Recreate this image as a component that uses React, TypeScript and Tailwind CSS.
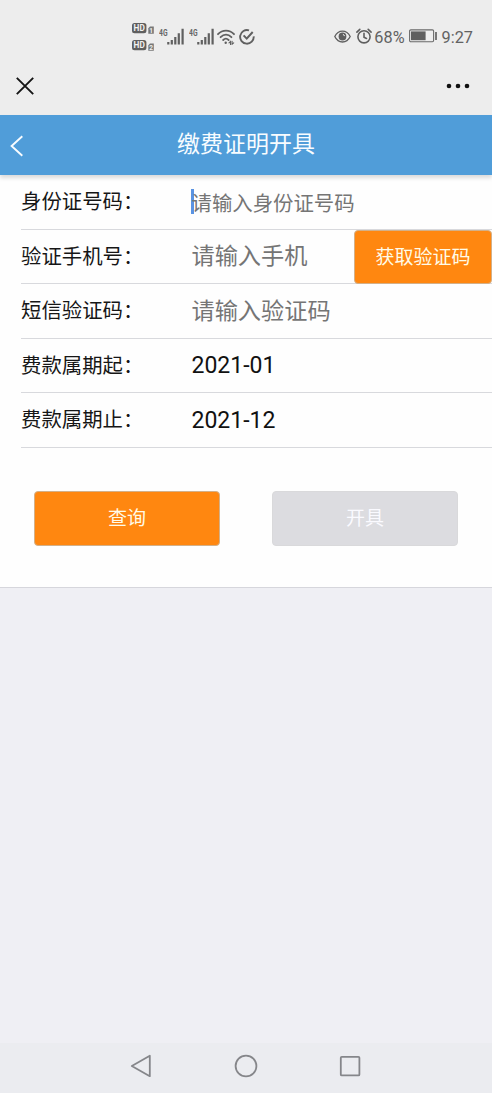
import React, { memo } from 'react';

// Small "HD" badge with the SIM card number next to it
const HdBadge = memo<{ sim: string }>(({ sim }) => (
  <svg width="22" height="11" viewBox="0 0 22 11">
    <rect x="0" y="0" width="14.4" height="10.2" rx="2.5" fill="#5f5f5f" />
    <text x="1.6" y="8.2" fontSize="8.6" fontWeight="700" textLength="11.2" lengthAdjust="spacingAndGlyphs" fill="#f2f2f2">HD</text>
    <path d="M16.3 5.2 18 3.4h3.8v7.4h-5.5z" fill="#777" />
    <text x="19.1" y="9.6" fontSize="6.5" fontWeight="700" textAnchor="middle" fill="#f2f2f2">{sim}</text>
  </svg>
));

const Signal = memo(() => (
  <svg width="26" height="18" viewBox="0 0 26 18">
    <text x="0" y="8" fontSize="9.4" fontWeight="700" textLength="8.5" lengthAdjust="spacingAndGlyphs" fill="#666">4G</text>
    <path d="M9.3 14v2.6M12.8 12v4.6M16.3 9v7.6M19.8 5.2v11.4M23.6 .8v15.8" stroke="#606060" strokeWidth="2.2" fill="none" />
  </svg>
));

const Wifi = memo(() => (
  <svg width="18" height="16" viewBox="0 0 18 16" fill="none" stroke="#606060" strokeWidth="1.8" strokeLinecap="round">
    <path d="M1 5.2C5.5.4 12.5.4 17 5.2M3.6 8.2c3.3-3.4 7.5-3.4 10.8 0M6.2 11c1.7-1.7 3.7-1.7 5.4 0" />
    <circle cx="8.7" cy="13.8" r="1.2" fill="#606060" stroke="none" />
    <path d="m12 13.8 1.5-1.4v3M15.1 12.2v3l1.6-1.4" strokeWidth="1.1" />
  </svg>
));

const CheckRing = memo(() => (
  <svg width="16" height="16" viewBox="0 0 16 16" fill="none" stroke="#606060" strokeWidth="1.9">
    <path d="M10 1.4A6.8 6.8 0 1 0 14.7 7.4" />
    <path d="m4.6 6.4 3.1 3.2 6-6.6" strokeWidth="2" />
  </svg>
));

const Eye = memo(() => (
  <svg width="17" height="13" viewBox="0 0 17 13" fill="none" stroke="#5f5f5f" strokeWidth="1.3">
    <path d="M.8 6.5C4.3-.8 12.7-.8 16.2 6.5 12.7 13.8 4.3 13.8.8 6.5Z" />
    <circle cx="8.5" cy="6.5" r="3.9" fill="#5f5f5f" stroke="none" />
    <path d="M8.9 4.4a2 2 0 0 1 1.6 1.7" stroke="#ededed" strokeWidth="1" />
  </svg>
));

const Alarm = memo(() => (
  <svg className="block" width="16" height="16" viewBox="0 0 16 16" fill="none" stroke="#5f5f5f" strokeWidth="1.6">
    <circle cx="8" cy="8.8" r="6.1" />
    <path d="M8 5.2v4l2.5 1.3M.9 4.1 3.8 1.3M12.2 1.3l2.9 2.8" strokeLinecap="round" />
  </svg>
));

const Battery = memo(() => (
  <svg className="block" width="28" height="14" viewBox="0 0 28 14">
    <rect x=".6" y=".9" width="24" height="11.8" rx="1.2" fill="none" stroke="#6a6a6a" strokeWidth="1.1" />
    <rect x="2" y="2.4" width="14.6" height="8.8" fill="#5f5f5f" />
    <path d="M27 3v8" stroke="#6a6a6a" strokeWidth="1.8" />
  </svg>
));

const StatusBar = memo(() => (
  <div className="flex h-[58px] items-center pt-[15px] pr-[19px] pl-[132px] font-[Roboto,sans-serif] text-[#626262]">
    <div className="flex flex-col gap-[6px]">
      <HdBadge sim="1" />
      <HdBadge sim="2" />
    </div>
    <div className="ml-[4.5px] flex gap-[4px]">
      <Signal />
      <Signal />
    </div>
    <div className="ml-[2.5px] flex gap-[3.5px]">
      <Wifi />
      <CheckRing />
    </div>
    <div className="ml-auto flex items-center">
      <Eye />
      <span className="ml-[5px]"><Alarm /></span>
      <span className="ml-[2px] pt-[3px] text-[16.3px] leading-none">68%</span>
      <span className="ml-[4px]"><Battery /></span>
      <span className="ml-[5px] pt-[3px] text-[16.3px] leading-none">9:27</span>
    </div>
  </div>
));

const Row: React.FC<{ label: string; children: React.ReactNode }> = ({ label, children }) => (
  <div className="ml-[21px] flex h-[54.6px] items-center border-b border-[#d8d9dd]">
    <div className="w-[170.5px] pb-[3px] text-[20.4px] leading-none text-[#161616]">{label}</div>
    {children}
  </div>
);

const App: React.FC = () => {
  return (
    <div className="flex h-[1093px] w-[492px] flex-col bg-[#efeff4] font-['Noto_Sans_CJK_SC',sans-serif]">
      <div className="h-[115px] bg-[#ededed]">
        <StatusBar />
        <div className="flex h-[56px] items-center justify-between pr-[22px] pl-[16px]">
          <svg width="18" height="18" viewBox="0 0 18 18" stroke="#151515" strokeWidth="1.9">
            <path d="m.8.8 16.4 16.4M17.2.8.8 17.2" />
          </svg>
          <svg width="24" height="6" viewBox="0 0 24 6" fill="#111">
            <circle cx="3" cy="3" r="2.3" />
            <circle cx="12" cy="3" r="2.3" />
            <circle cx="21" cy="3" r="2.3" />
          </svg>
        </div>
      </div>

      <header className="z-10 flex h-[60px] items-center bg-[#509dd9] shadow-[0_3px_4px_rgba(0,0,0,0.14)]">
        <svg className="mt-[2px] ml-[10px]" width="14" height="22" viewBox="0 0 14 22" fill="none" stroke="#f8fcff" strokeWidth="1.9">
          <path d="M12.3 1.3 1.6 11l10.7 9.7" />
        </svg>
        <h1 className="mr-[24px] flex-1 pb-[5px] text-center text-[23px] leading-none text-[#f8fcff]">缴费证明开具</h1>
      </header>

      <main className="h-[412.6px] border-b border-[#d6d6dc] bg-[#fefefe]">
        <Row label="身份证号码：">
          <span className="-ml-[1px] h-[25px] w-[3px] shrink-0 bg-[#5a93e2]" />
          <span className="-ml-[2px] text-[20.4px] leading-none text-[#757575]">请输入身份证号码</span>
        </Row>
        <Row label="验证手机号：">
          <span className="pb-[3px] text-[23.2px] leading-none text-[#757575]">请输入手机</span>
          <button className="mt-[1px] ml-auto h-[54px] w-[138px] shrink-0 rounded-[4px] border border-[#d3b089] bg-[#ff8710] pb-[3px] text-[19px] leading-none text-[#fffbe8]">
            获取验证码
          </button>
        </Row>
        <Row label="短信验证码：">
          <span className="pb-[2px] text-[23.2px] leading-none text-[#757575]">请输入验证码</span>
        </Row>
        <Row label="费款属期起：">
          <span className="font-[Roboto,sans-serif] text-[23px] leading-none text-[#111]">2021-01</span>
        </Row>
        <Row label="费款属期止：">
          <span className="font-[Roboto,sans-serif] text-[23px] leading-none text-[#111]">2021-12</span>
        </Row>

        <div className="mt-[43px] flex justify-between px-[34px] text-[19px] leading-none">
          <button className="h-[55px] w-[186px] rounded-[4px] border border-[#d3b089] bg-[#ff8710] pb-[4px] text-[#fffbe8]">查询</button>
          <button className="h-[55px] w-[186px] rounded-[4px] border border-[#d9d9db] bg-[#dcdce0] pb-[4px] text-[#fafaff]">开具</button>
        </div>
      </main>

      <nav className="mt-auto flex h-[50px] items-center justify-center gap-[80px] bg-[#ebecf0] pb-[4px]">
        <svg width="24" height="24" viewBox="0 0 24 24" fill="none" stroke="#85868a" strokeWidth="1.8" strokeLinejoin="round">
          <path d="M19.8 1.8v20.4L1.8 12Z" />
        </svg>
        <svg width="24" height="24" viewBox="0 0 24 24" fill="none" stroke="#85868a" strokeWidth="1.8">
          <circle cx="12" cy="12" r="10.4" />
        </svg>
        <svg width="24" height="24" viewBox="0 0 24 24" fill="none" stroke="#85868a" strokeWidth="1.8">
          <rect x="2.8" y="2.8" width="18.6" height="18.6" rx="1" />
        </svg>
      </nav>
    </div>
  );
};

export default App;
